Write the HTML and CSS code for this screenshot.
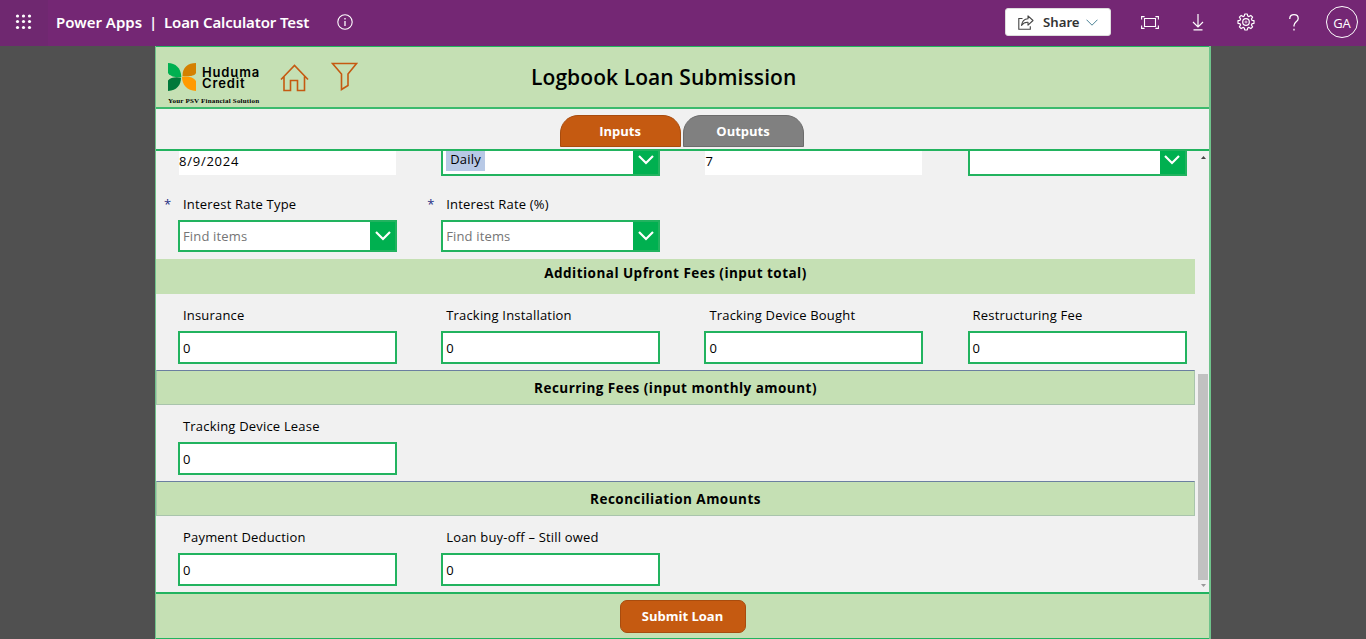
FILE: index.html
```html
<!DOCTYPE html>
<html lang="en">
<head>
<meta charset="utf-8">
<title>Loan Calculator Test</title>
<link rel="stylesheet" href="styles.css">
</head>
<body>
<header class="topbar">
  <div class="waffle">
    <svg width="18" height="18" viewBox="0 0 18 18" fill="#fff"><circle cx="2.500" cy="3" r="1.600"/><circle cx="8.500" cy="3" r="1.600"/><circle cx="14.500" cy="3" r="1.600"/><circle cx="2.500" cy="8.500" r="1.600"/><circle cx="8.500" cy="8.500" r="1.600"/><circle cx="14.500" cy="8.500" r="1.600"/><circle cx="2.500" cy="14.500" r="1.600"/><circle cx="8.500" cy="14.500" r="1.600"/><circle cx="14.500" cy="14.500" r="1.600"/></svg>
  </div>
  <div class="brand"><span class="brand-name">Power Apps</span><span class="brand-sep">|</span><span class="app-name">Loan Calculator Test</span></div>
  <svg class="info" width="16" height="16" viewBox="0 0 16 16" fill="none" stroke="#fff"><circle cx="8" cy="8" r="7.2" stroke-width="1.1"/><path d="M8 7v5M8 4v1.4" stroke-width="1.3"/></svg>
  <div class="tools">
    <button class="share">
      <svg width="16" height="15" viewBox="0 0 16 15" fill="none" stroke="#444" stroke-width="1.1"><path d="M4.5 3.5H.8v10.7h11.5v-3"/><path d="M10 .9l5 4.6-5 4.6V7.3C7 7.1 5.2 8 3.5 10.400C4 6.500 6 3.900 10 3.700z" stroke-linejoin="round"/></svg>
      <span>Share</span>
      <svg width="12" height="7" viewBox="0 0 12 7" fill="none" stroke="#4c8396" stroke-width="1"><path d="M.5.7L6 6.200 11.500.7"/></svg>
    </button>
    <svg class="tool fit" width="18" height="13" viewBox="0 0 18 13" fill="none" stroke="#fff" stroke-width="1.1"><path d="M3.500 2.500h11v8h-11zM.6 3.500V.6h3M14.400.6h3v2.900M17.400 9.500v2.900h-3M3.600 12.400h-3V9.500"/></svg>
    <svg class="tool down" width="12" height="17" viewBox="0 0 12 17" fill="none" stroke="#fff" stroke-width="1.2"><path d="M6 0v13M1 8l5 5 5-5M1.500 15.900h9"/></svg>
    <svg class="tool gear" width="18" height="18" viewBox="0 0 18 18" fill="none" stroke="#fff" stroke-width="1.2" stroke-linejoin="round"><path d="M7.700 1h2.600l.4 2 1.300.6 1.800-1.200 1.800 1.800-1.200 1.800.6 1.300 2 .4v2.600l-2 .4-.6 1.300 1.200 1.800-1.800 1.800-1.800-1.200-1.300.6-.4 2H7.700l-.4-2-1.300-.6-1.800 1.200-1.800-1.800 1.200-1.800-.6-1.300-2-.4V7.700l2-.4.6-1.300-1.200-1.800 1.800-1.800L6 3.600 7.300 3z"/><circle cx="9" cy="9" r="3.300"/><circle cx="9" cy="9" r="1" stroke-width=".7"/></svg>
    <svg class="tool help" width="10" height="17" viewBox="0 0 10 17" fill="none" stroke="#fff" stroke-width="1.300"><path d="M.8 5V4.300C1 2 2.700.7 5 .7s4.200 1.400 4.200 3.700C9.200 7.700 5 8 5 11.500v1M5 14.700v1.700"/></svg>
    <div class="avatar">GA</div>
  </div>
</header>
<main class="app">
  <section class="app-head">
    <div class="logo">
      <div class="logo-main">
        <svg width="28" height="28" viewBox="0 0 28 28"><path d="M0 0c7.500 0 13 5 13.300 14C10 14.500 3 14.500 0 10z" fill="#00b050"/><path d="M0 17.500C2.500 14.500 8 13.500 13 14.800 13 22 9 27.500 0 28z" fill="#00793a"/><path d="M28 0c-8 0-13.500 4-13.500 13 4 .3 11.500 1 13.500-3z" fill="#d48000"/><path d="M14 13.800c6-.8 11.500.2 14 4.200v10c-9-.5-14-6-14-14.200z" fill="#ff9a00"/></svg>
        <div class="logo-name"><span>Huduma</span><span>Credit</span></div>
      </div>
      <div class="tagline">Your PSV Financial Solution</div>
    </div>
    <svg class="home" width="29" height="28" viewBox="0 0 29 28" fill="none" stroke="#c55a11" stroke-width="1.600"><path d="M1 15.500L14.500 1.500 28 15.500M4 12.500V26.500h6.500V16.500h7v10H24.500V12.500"/></svg>
    <svg class="filter" width="27" height="29" viewBox="0 0 27 29" fill="none" stroke="#c55a11" stroke-width="1.600"><path d="M1.500 1.500h24L17 12v11.500L10.500 27.500V12z"/></svg>
    <h1 class="title">Logbook Loan Submission</h1>
  </section>
  <nav class="tabs"><button class="tab active">Inputs</button><button class="tab">Outputs</button></nav>
  <section class="scroller">
    <div class="form">
      <div class="row clipped">
        <div class="plain">8/9/2024</div>
        <div class="combo"><span class="picked">Daily</span><i class="drop"><svg class="chev" viewBox="0 0 16 10"><path d="M1 1l7 7 7-7"/></svg></i></div>
        <div class="plain">7</div>
        <div class="combo"><i class="drop"><svg class="chev" viewBox="0 0 16 10"><path d="M1 1l7 7 7-7"/></svg></i></div>
      </div>
      <div class="row rates">
        <div class="field"><label class="required">Interest Rate Type</label><div class="combo"><span class="hint">Find items</span><i class="drop"><svg class="chev" viewBox="0 0 16 10"><path d="M1 1l7 7 7-7"/></svg></i></div></div>
        <div class="field"><label class="required">Interest Rate (%)</label><div class="combo"><span class="hint">Find items</span><i class="drop"><svg class="chev" viewBox="0 0 16 10"><path d="M1 1l7 7 7-7"/></svg></i></div></div>
      </div>
      <h2 class="band first">Additional Upfront Fees (input total)</h2>
      <div class="row">
        <div class="field"><label>Insurance</label><div class="box">0</div></div>
        <div class="field"><label>Tracking Installation</label><div class="box">0</div></div>
        <div class="field"><label>Tracking Device Bought</label><div class="box">0</div></div>
        <div class="field"><label>Restructuring Fee</label><div class="box">0</div></div>
      </div>
      <h2 class="band">Recurring Fees (input monthly amount)</h2>
      <div class="row">
        <div class="field"><label>Tracking Device Lease</label><div class="box">0</div></div>
      </div>
      <h2 class="band">Reconciliation Amounts</h2>
      <div class="row last">
        <div class="field"><label>Payment Deduction</label><div class="box">0</div></div>
        <div class="field"><label>Loan buy-off – Still owed</label><div class="box">0</div></div>
      </div>
    </div>
    <div class="scrollbar">
      <svg width="5" height="3" viewBox="0 0 5 3"><path d="M0 3L2.500 0 5 3z" fill="#444"/></svg>
      <div class="thumb"></div>
      <svg width="5" height="3" viewBox="0 0 5 3"><path d="M0 0h5L2.500 3z" fill="#999"/></svg>
    </div>
  </section>
  <footer class="foot"><button class="submit">Submit Loan</button></footer>
</main>
</body>
</html>
```

FILE: styles.css
```css
* { box-sizing: border-box; }
body { margin: 0; height: 639px; overflow: hidden; background: #505050; font-family: "Open Sans", sans-serif; font-size: 13px; color: #000; }
button { font: inherit; margin: 0; padding: 0; }
svg { display: block; flex: none; }

.topbar { display: flex; align-items: center; height: 46px; background: #742774; color: #fff; padding-bottom: 2px; }
.waffle { width: 48px; height: 46px; margin-bottom: -2px; padding: 13px 0 0 15px; background: #6f2870; }
.brand { display: flex; width: 261px; margin-left: 8px; font-family: "Noto Sans", sans-serif; font-weight: 600; font-size: 15px; white-space: nowrap; }
.brand-name { width: 93px; }
.brand-sep { width: 15px; }
.app-name { letter-spacing: -.14px; }
.info { margin-left: 20px; }
.tools { display: flex; align-items: center; margin-left: auto; padding-right: 8px; }
.share { display: flex; align-items: center; width: 106px; height: 28px; padding-left: 12px; background: #fff; border: 1px solid #ddd; border-radius: 3px; color: #333; font-family: "Noto Sans", sans-serif; font-weight: 600; font-size: 13.200px; }
.share span { width: 43px; margin-left: 9px; text-align: left; }
.fit { margin-left: 30px; }
.down { margin-left: 33px; }
.gear { margin-left: 33px; }
.help { margin-left: 34px; }
.avatar { display: grid; place-items: center; width: 32px; height: 32px; margin-left: 27px; border: 1px solid #fff; border-radius: 50%; font-size: 13px; padding-top: 2px; }

.app { display: flex; flex-direction: column; width: 1056px; height: 593px; margin-left: 155px; background: #f1f1f1; border-left: 1px solid #6fc38b; border-right: 2px solid #6fc38b; }
.app-head { display: flex; height: 63px; flex: none; background: #c5e0b4; border-top: 1px solid #22b35f; border-bottom: 2px solid #3cba6d; padding-left: 12px; }
.logo { width: 93px; padding-top: 16px; }
.logo-main { display: flex; gap: 6px; height: 34px; }
.logo-name { display: flex; flex-direction: column; padding-top: 4px; font: 600 13px/11px Inter, sans-serif; letter-spacing: .85px; }
.logo-name span { height: 11px; }
.tagline { font: 700 7px/9px "Liberation Serif", serif; white-space: nowrap; letter-spacing: .2px; }
.home { margin: 17px 0 0 19px; }
.filter { margin: 15px 0 0 22px; }
.title { margin: 15px 0 0 173px; font-size: 21px; line-height: 30px; font-weight: 600; white-space: nowrap; letter-spacing: .08px; }

.tabs { display: flex; justify-content: center; gap: 2px; height: 42px; flex: none; padding: 6px 2px 0 0; border-bottom: 2px solid #22b35f; }
.tab { width: 121px; height: 32px; padding-bottom: 1px; border: 1px solid #6c6c6c; border-radius: 18px 18px 0 0; background: #808080; color: #fff; font-weight: 700; }
.tab.active { background: #c55a11; border-color: #a84c0e; }

.scroller { display: flex; height: 441px; flex: none; overflow: hidden; }
.form { width: 1039px; }
.row { display: grid; grid-template-columns: repeat(4, 219px); column-gap: 44.200px; height: 76px; padding: 9px 0 0 22px; }
.row.clipped { height: 25px; padding-top: 0; grid-template-rows: 25px; align-items: end; }
.rates { height: 83px; padding-top: 16px; }
.field { display: flex; flex-direction: column; }
.field label { height: 28px; padding-left: 5px; line-height: 24px; white-space: nowrap; letter-spacing: .19px; }
.required { position: relative; }
.required::before { content: "*"; position: absolute; left: -14px; top: 0; color: #1f2f85; }
.box, .combo { height: 33px; background: #fff; border: 2px solid #22b35f; }
.box { padding: 1px 0 0 3px; line-height: 28px; }
.combo { display: flex; align-items: stretch; }
.rates .combo { height: 32px; }
.hint { padding-left: 3px; line-height: 29px; color: #757575; letter-spacing: .15px; }
.drop { display: grid; place-items: center; width: 25px; margin-left: auto; background: #00b050; }
.chev { width: 16px; height: 10px; fill: none; stroke: #fff; stroke-width: 2.200; }
.picked { align-self: center; height: 22px; margin: 0 0 0 3px; padding: 0 4px; line-height: 21px; background: #b8c9e6; letter-spacing: .2px; }
.plain { height: 31px; margin: 0 1px 1px; padding-top: 3px; background: #fff; line-height: 29px; letter-spacing: .75px; }

.band { margin: 0; height: 35px; background: #c5e0b4; border: 1px solid #a9c4ac; border-top: 1px solid #6b7fa0; font-size: 13.500px; line-height: 35px; font-weight: 700; text-align: center; letter-spacing: .47px; }
.band.first { border-color: #c5e0b4; line-height: 27px; }

.scrollbar { display: flex; flex-direction: column; align-items: center; width: 10px; margin-left: 3px; padding-top: 5px; }
.thumb { width: 10px; height: 206px; margin: 215px 0 4px; background: #c1c1c1; }
.foot { flex: 1; display: flex; justify-content: center; background: #c5e0b4; border-top: 2px solid #22b35f; border-bottom: 1px solid #22b35f; padding-top: 6px; }
.submit { width: 126px; height: 33px; padding-bottom: 2px; border: 1px solid #a84c0e; border-radius: 7px; background: #c55a11; color: #fff; font-weight: 700; }
```
